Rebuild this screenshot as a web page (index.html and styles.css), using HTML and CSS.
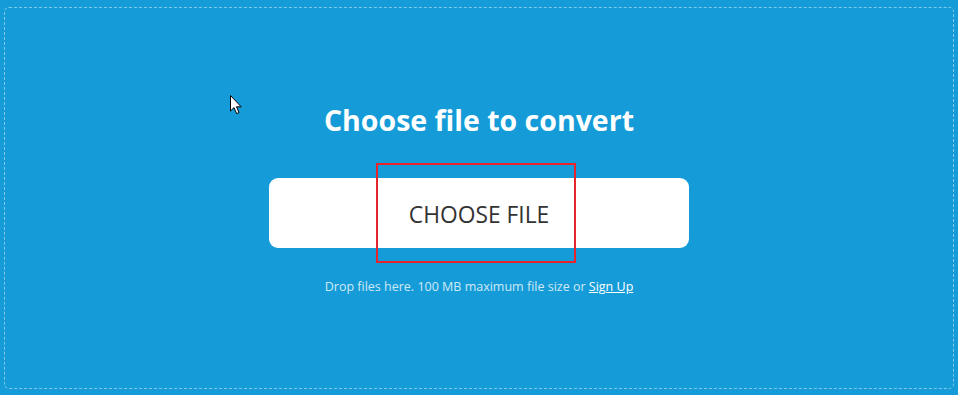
FILE: index.html
```html
<!DOCTYPE html>
<html lang="en">
<head>
<meta charset="utf-8">
<title>Choose file to convert</title>
<link rel="stylesheet" href="styles.css">
</head>
<body>
<div class="page">
  <div class="dropzone">
    <h1 class="title">Choose file to convert</h1>
    <button class="choose-btn" type="button">CHOOSE FILE</button>
    <p class="hint">Drop files here. 100 MB maximum file size or <a href="#" class="signup">Sign Up</a></p>
  </div>
  <div class="highlight"></div>
  <svg class="cursor" width="13" height="20" viewBox="0 0 13 20" aria-hidden="true">
    <path d="M0.5 0.5 L0.5 16 L4 12.6 L6.6 18.6 L9 17.6 L6.5 11.8 L11.2 11.8 Z" fill="#ffffff" stroke="#000000" stroke-width="1" stroke-linejoin="miter"/>
  </svg>
</div>
</body>
</html>
```
FILE: styles.css
```css
html, body {
  margin: 0;
  padding: 0;
  background: #159cd8;
}
body {
  font-family: "Open Sans", "Noto Sans", sans-serif;
}
.page {
  position: relative;
  width: 958px;
  height: 395px;
  padding: 7px 4px 0 4px;
  box-sizing: border-box;
}
.dropzone {
  width: 950px;
  height: 382px;
  box-sizing: border-box;
  border: 1px dashed rgba(255, 255, 255, 0.45);
  border-radius: 5px;
  display: flex;
  flex-direction: column;
  align-items: center;
  padding-top: 94px;
}
.title {
  margin: 0;
  color: #ffffff;
  font-size: 28.5px;
  font-weight: 700;
  line-height: 36px;
  letter-spacing: 0;
}
.choose-btn {
  margin-top: 40px;
  width: 420px;
  height: 70px;
  border: none;
  border-radius: 9px;
  background: #ffffff;
  color: #333333;
  font-family: "Open Sans", "Noto Sans", sans-serif;
  font-size: 22.8px;
  font-weight: 400;
  letter-spacing: 0;
  padding: 2px 0 0 0;
}
.hint {
  margin: 30px 0 0 0;
  color: rgba(255, 255, 255, 0.8);
  font-size: 12.5px;
  line-height: 18px;
  letter-spacing: 0;
}
.signup {
  color: #ffffff;
  text-decoration: underline;
}
.highlight {
  position: absolute;
  left: 376px;
  top: 163px;
  width: 200px;
  height: 100px;
  box-sizing: border-box;
  border: 2px solid #e5242c;
}
.cursor {
  position: absolute;
  left: 230px;
  top: 95px;
}
```
